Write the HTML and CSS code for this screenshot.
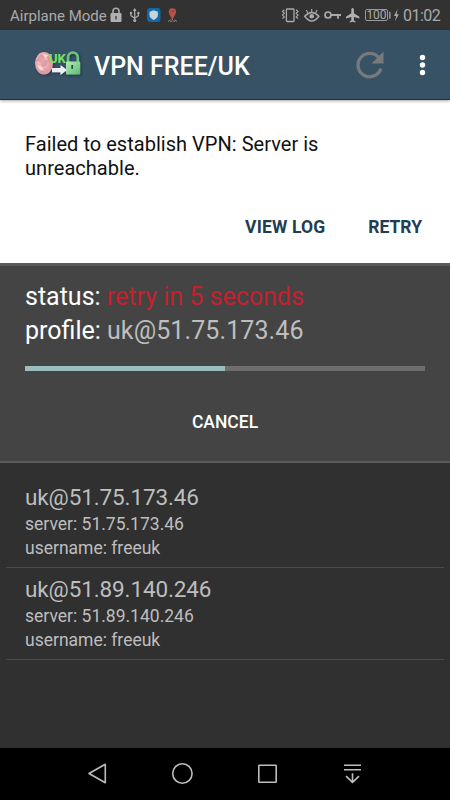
FILE: index.html
```html
<!DOCTYPE html>
<html lang="en">
<head>
<meta charset="utf-8">
<title>VPN FREE/UK</title>
<link rel="stylesheet" href="styles.css">
</head>
<body>
<header class="status-bar">
  <span class="carrier">Airplane Mode</span>
  <svg class="notifications" width="70" height="30" viewBox="110 0 70 30" fill="none" stroke="#aaa">
    <path d="M113 14V11.2a3 3 0 0 1 6 0V14" stroke-width="1.6"/>
    <rect x="110.5" y="13" width="11" height="9" rx="1" fill="#b0b0b0" stroke="none"/>
    <path d="M116 16v3.5" stroke="#444" stroke-width="1.4"/>
    <path d="M134.7 9v11M131 13v2.7l3.7 2.5 3.7-2.5V13" stroke-width="1.3"/>
    <path d="M132.8 11l1.9-3 1.9 3z" fill="#aaa" stroke="none"/>
    <circle cx="131" cy="13" r="1.2" fill="#aaa" stroke="none"/>
    <circle cx="138.4" cy="13" r="1.2" fill="#aaa" stroke="none"/>
    <circle cx="134.7" cy="20.5" r="1.6" fill="#aaa" stroke="none"/>
    <rect x="147" y="8" width="13.5" height="14" rx="3" fill="#1468a5" stroke="none"/>
    <path d="M153.7 10.3l4.2 1.4v3.2q0 3-4.2 5-4.2-2-4.2-5v-3.2z" fill="#c5d4df" stroke="none"/>
    <path d="M168 21.5l2.6-1.8M177 21.5l-2.6-1.8M170 21.5q2.5-1.4 5 0" stroke="#888" stroke-width="1"/>
    <path d="M172.4 8.2a3.6 3.6 0 0 1 3.6 3.7c0 2.7-2.6 4.3-3.1 8h-1c-.5-3.7-3.1-5.3-3.1-8a3.6 3.6 0 0 1 3.6-3.7z" fill="#b55348" stroke="none"/>
    <circle cx="173" cy="11.2" r="1" fill="#8c3a35" stroke="none"/>
  </svg>
  <span class="spacer"></span>
  <svg class="indicators" width="80" height="30" viewBox="281 0 80 30" fill="none" stroke="#aaa">
    <rect x="286.4" y="9" width="7.6" height="12.5" rx=".8" stroke-width="1.3"/>
    <path d="M284.3 9.8l-1.8 1.7 1.8 1.8-1.8 1.8 1.8 1.8-1.8 1.8M296.2 9.800l1.800 1.700-1.800 1.800 1.800 1.800-1.800 1.800 1.800 1.800" stroke-width="1.2"/>
    <path d="M304.700 16.200q7.100-7.600 14.200 0-7.100 9.400-14.200 0z" stroke-width="1.500"/>
    <circle cx="311.700" cy="16.300" r="2.300" fill="#aaa" stroke="none"/>
    <path d="M311.700 9v3M306.200 10l1.700 2.800M317.200 10l-1.700 2.800" stroke-width="1.200"/>
    <circle cx="328" cy="15" r="3" stroke-width="1.700"/>
    <path d="M331 15h10M338 15v3.800" stroke-width="1.800"/>
    <path d="M352.600 8c-.8 0-1.300.8-1.300 1.800v3.500L346 16.700v1.700l5.300-1.500v3.400l-1.600 1.100v1.100l2.900-.8 2.900.8v-1.100l-1.600-1.100v-3.400l5.500 1.500v-1.700l-5.500-3.400V9.800c0-1-.5-1.800-1.300-1.800z" fill="#b0b0b0" stroke="none"/>
  </svg>
  <span class="battery">100</span>
  <svg class="charge" width="15" height="30" viewBox="388 0 15 30">
    <path d="M389.200 11.700h1.300v7h-1.300zM397.600 9l-3.600 7h2.200l-1.300 5.500 3.900-7.200h-2.200z" fill="#aaa"/>
  </svg>
  <span class="clock">01:02</span>
</header>

<div class="app-bar">
  <svg class="logo" width="54" height="44" viewBox="31 43 54 44">
    <defs>
      <linearGradient id="lock" x2="1" y2="1"><stop stop-color="#b4edb5"/><stop offset="1" stop-color="#5cb876"/></linearGradient>
      <radialGradient id="globe" cx=".4" cy=".4"><stop stop-color="#f8d3d5"/><stop offset="1" stop-color="#e09ba3"/></radialGradient>
      <filter id="shade"><feDropShadow dx="1" dy="1" stdDeviation="1" flood-color="#17283a" flood-opacity=".8"/></filter>
    </defs>
    <g filter="url(#shade)">
      <ellipse cx="44" cy="63.300" rx="9" ry="11.200" fill="url(#globe)"/>
      <path d="M37 59l4-5 4 1-1 4 4 2-2 5-4 1-2-5-4-1zM47 55l4 4v5l-3-3zM40 69l4 1-1 3z" fill="#d4737f" opacity=".45"/>
      <path d="M37 65l5 2 2 4-4-1zM42 54l6 1-2 3z" fill="#fff0ee" opacity=".7"/>
      <path d="M68 63v-5.500a4.900 5 0 0 1 9.800 0V63" fill="none" stroke="#68c77c" stroke-width="2.600"/>
      <rect x="66" y="61.500" width="14.200" height="13" rx="1.200" fill="url(#lock)"/>
      <path d="M72.200 65v3.800" stroke="#184f2e" stroke-width="1.700"/>
      <path d="M52 68h8.500v-3l6.500 5-6.500 5v-2.800H52z" fill="#eaf0f5"/>
    </g>
    <text class="logo-text" x="49" y="63">UK</text>
  </svg>
  <h1 class="title">VPN FREE/UK</h1>
  <span class="spacer"></span>
  <svg class="refresh" width="30" height="30" viewBox="355 50 30 30">
    <path d="M380.900 68.500a11.700 11.700 0 1 1-2.500-11.300" fill="none" stroke="#77797c" stroke-width="3.300"/>
    <path d="M383.500 51.500v12h-12z" fill="#77797c"/>
  </svg>
  <svg class="menu" width="8" height="24" viewBox="0 0 8 24" fill="#fff"><circle cx="4.500" cy="4.500" r="2.700"/><circle cx="4.500" cy="12" r="2.700"/><circle cx="4.500" cy="19.500" r="2.700"/></svg>
</div>

<section class="message">
  <p class="message-text">Failed to establish VPN: Server is<br>unreachable.</p>
  <div class="actions"><span class="view-log">VIEW LOG</span><span class="retry">RETRY</span></div>
</section>

<section class="connection">
  <div class="line"><span class="label">status: </span><span class="state">retry in 5 seconds</span></div>
  <div class="line"><span class="label">profile: </span><span class="profile">uk@51.75.173.46</span></div>
  <div class="progress"><div class="progress-value"></div></div>
  <div class="cancel">CANCEL</div>
</section>

<main class="servers">
  <article class="server">
    <h2 class="name">uk@51.75.173.46</h2>
    <p class="detail">server: 51.75.173.46</p>
    <p class="detail">username: freeuk</p>
  </article>
  <article class="server">
    <h2 class="name">uk@51.89.140.246</h2>
    <p class="detail">server: 51.89.140.246</p>
    <p class="detail">username: freeuk</p>
  </article>
</main>

<nav class="nav-bar">
  <svg width="450" height="52" viewBox="0 748 450 52" fill="none" stroke="#bdbdbd" stroke-width="1.600" stroke-linejoin="round">
    <path d="M105.300 764.300v18.400L89 773.500z"/>
    <circle cx="182.400" cy="773.500" r="9.700"/>
    <rect x="258.800" y="765.200" width="17.400" height="17" rx=".5"/>
    <path d="M344 765.200h17M344 769.700h17M352.500 773.200v9M346 776.200l6.500 6.200 6.500-6.200"/>
  </svg>
</nav>
</body>
</html>
```
FILE: styles.css
```css
* { box-sizing: border-box; margin: 0; padding: 0; }
body {
  width: 450px;
  height: 800px;
  display: flex;
  flex-direction: column;
  overflow: hidden;
  background: #303030;
  color: #bebebe;
  font-family: Roboto, sans-serif;
}
svg { display: block; flex: none; }
.spacer { flex: 1; }
.status-bar {
  flex: none;
  height: 30px;
  display: flex;
  align-items: center;
  padding: 0 10px;
  background: #323232;
  color: #aaa;
  white-space: nowrap;
}
.carrier { width: 100px; padding-top: 1px; font-size: 15px; line-height: 30px; }
.battery {
  width: 23px;
  height: 12px;
  margin: 0 0 0 4px;
  border: 1px solid #999;
  border-radius: 2px;
  font-size: 12px;
  line-height: 10px;
  text-align: center;
}
.clock { width: 37px; padding-top: 1px; font-size: 16px; line-height: 30px; letter-spacing: -0.5px; }
.app-bar {
  position: relative;
  flex: none;
  height: 70px;
  display: flex;
  align-items: center;
  padding: 0 24px 0 31px;
  background: #375165;
  border-bottom: 1px solid #16334a;
  box-shadow: 0 1px 3px rgba(0, 0, 0, 0.35);
}
.logo-text { font: bold 13px Roboto, sans-serif; fill: #74e65f; }
.title { margin: 4px 0 0 9px; font-size: 25px; font-weight: 500; line-height: 30px; color: #fff; white-space: nowrap; }
.menu { margin-left: 33px; margin-top: 1px; }
.message {
  flex: none;
  height: 163px;
  padding: 32px 25px 0;
  background: #fff;
  color: #111;
}
.message-text { font-size: 20px; line-height: 24px; letter-spacing: 0.03px; }
.actions { display: flex; justify-content: flex-end; gap: 43px; margin: 37px 3px 0 0; font-size: 17.5px; font-weight: 700; line-height: 21px; color: #213d54; }
.view-log { letter-spacing: 0.15px; }
.connection {
  flex: none;
  height: 200px;
  padding: 14px 25px 0;
  background: #444;
  border-top: 3px solid #5a5a5a;
  border-bottom: 2px solid #5a5a5a;
}
.line { font-size: 25px; line-height: 34px; white-space: pre; }
.label { color: #fff; }
.state { color: #c4202e; }
.profile { letter-spacing: 0.1px; }
.progress { height: 5px; margin-top: 18px; background: #6e6e6e; }
.progress-value { width: 50%; height: 100%; background: #9abdbe; }
.cancel { margin-top: 41px; text-align: center; font-size: 17.5px; font-weight: 500; line-height: 21px; color: #fff; }
.servers { flex: 1; padding: 13px 6px 0; }
.server { height: 92px; padding: 7px 19px 0; border-bottom: 1px solid #4a4a4a; }
.name { font-size: 22.5px; font-weight: 400; line-height: 29px; letter-spacing: -0.12px; }
.detail { font-size: 17.5px; line-height: 24px; }
.nav-bar { flex: none; height: 52px; background: #000; }
```
